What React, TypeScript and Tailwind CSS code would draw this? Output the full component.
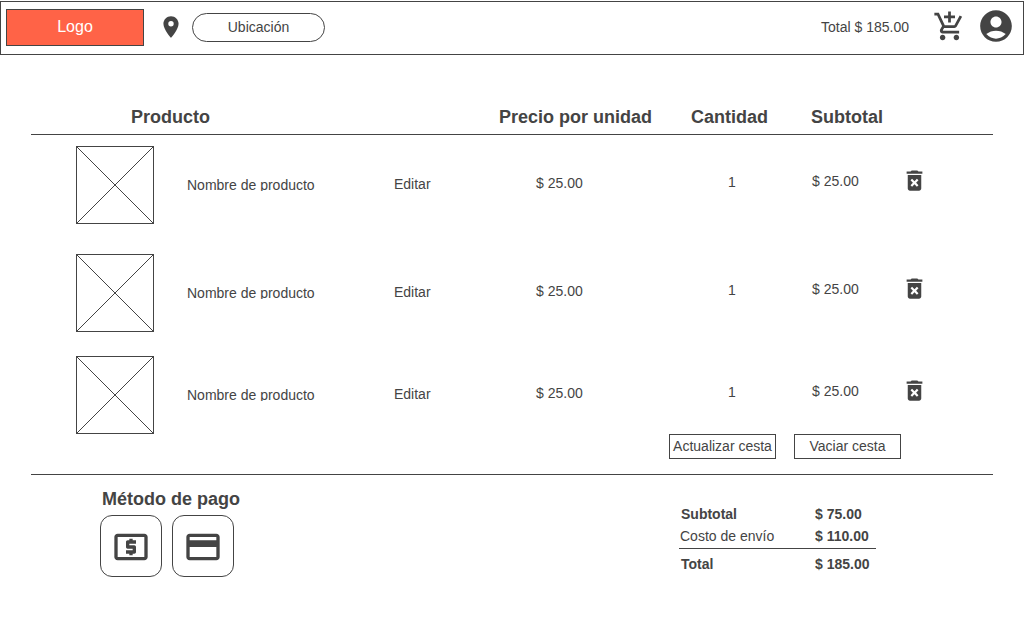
import { MdAccountCircle, MdAddShoppingCart, MdCreditCard, MdDeleteForever, MdLocalAtm, MdLocationOn } from 'react-icons/md';

const products = [
  { id: 1, name: 'Nombre de producto', price: '$ 25.00', quantity: 1, subtotal: '$ 25.00', row: 'h-[108px]' },
  { id: 2, name: 'Nombre de producto', price: '$ 25.00', quantity: 1, subtotal: '$ 25.00', row: 'h-[102px]' },
  { id: 3, name: 'Nombre de producto', price: '$ 25.00', quantity: 1, subtotal: '$ 25.00', row: 'h-[89px]' },
];

function Placeholder() {
  return (
    <svg className="block size-[78px]" viewBox="0 0 78 78" fill="none" stroke="#444" shapeRendering="crispEdges" role="img" aria-label="Imagen">
      <rect x="0.5" y="0.5" width="77" height="77" />
      <path d="M0 0L78 78M78 0L0 78" />
    </svg>
  );
}

function TopBar() {
  return (
    <header className="mt-px flex h-[54px] items-center border border-[#444] pb-[2px] pl-[5px] pr-2">
      <a href="#" className="flex h-[37px] w-[138px] items-center justify-center border border-[#444] bg-[#ff6347] text-base text-white">
        Logo
      </a>
      <MdLocationOn className="ml-[14px] size-[26px]" />
      <button className="ml-2 h-[29px] w-[133px] rounded-full border border-[#444]">Ubicación</button>
      <p className="ml-auto">Total $ 185.00</p>
      <nav className="ml-6 flex items-center gap-[11px] pb-[2px]">
        <button aria-label="Ver cesta">
          <MdAddShoppingCart className="size-[33px]" />
        </button>
        <button aria-label="Mi cuenta">
          <MdAccountCircle className="size-[38px]" />
        </button>
      </nav>
    </header>
  );
}

function CartTable() {
  return (
    <table className="w-full table-fixed border-separate border-spacing-0 text-left">
      <colgroup>
        <col className="w-[156px]" />
        <col className="w-[207px]" />
        <col className="w-[105px]" />
        <col className="w-[192px]" />
        <col className="w-[120px]" />
        <col className="w-[90px]" />
        <col className="w-[92px]" />
      </colgroup>
      <thead className="text-lg leading-[26px]">
        <tr className="h-[31px] align-top">
          <th colSpan={3} className="border-b border-[#444] pl-[100px]">Producto</th>
          <th className="border-b border-[#444]">Precio por unidad</th>
          <th className="border-b border-[#444]">Cantidad</th>
          <th className="border-b border-[#444]">Subtotal</th>
          <td className="border-b border-[#444]" />
        </tr>
      </thead>
      <tbody>
        {products.map((p) => (
          <tr key={p.id} className={`${p.row} align-top`}>
            <td className="pl-[45px] pt-[11px]">
              <Placeholder />
            </td>
            <td className="pt-10">
              <span className="block h-4 overflow-hidden">{p.name}</span>
            </td>
            <td className="pt-[39px]">
              <a href="#" className="block">Editar</a>
            </td>
            <td className="pl-[37px] pt-[38px]">{p.price}</td>
            <td className="pl-[37px] pt-[37px]">{p.quantity}</td>
            <td className="pl-px pt-9">{p.subtotal}</td>
            <td className="pt-8">
              <button aria-label="Eliminar producto" className="block">
                <MdDeleteForever className="size-[27px]" />
              </button>
            </td>
          </tr>
        ))}
      </tbody>
    </table>
  );
}

export default function App() {
  return (
    <div className="flow-root bg-white font-['Liberation_Sans',Arial,sans-serif] text-sm leading-5 text-[#444]">
      <TopBar />
      <main className="mx-[31px] mt-[49px]">
        <CartTable />
        <div className="flex justify-end gap-[18px] border-b border-[#444] pb-[15px] pr-[92px]">
          <button className="h-[25px] w-[107px] whitespace-nowrap border border-[#444] pb-[2px]">Actualizar cesta</button>
          <button className="h-[25px] w-[107px] whitespace-nowrap border border-[#444] pb-[2px]">Vaciar cesta</button>
        </div>
        <div className="flex items-start justify-between pl-[69px] pr-[117px]">
          <section className="pt-3">
            <h2 className="pl-[2px] text-lg font-bold leading-6">Método de pago</h2>
            <div className="mt-1 flex gap-[10px]">
              <button aria-label="Efectivo" className="flex size-[62px] items-center justify-center rounded-xl border border-[#444] pt-[2px]">
                <MdLocalAtm className="size-10" />
              </button>
              <button aria-label="Tarjeta" className="flex size-[62px] items-center justify-center rounded-xl border border-[#444] pt-[2px]">
                <MdCreditCard className="size-10" />
              </button>
            </div>
          </section>
          <dl className="mt-[29px] grid w-[197px] grid-cols-[136px_1fr] font-bold">
            <dt className="h-[22px] pl-[2px]">Subtotal</dt>
            <dd>$ 75.00</dd>
            <dt className="h-[22px] pl-px font-normal">Costo de envío</dt>
            <dd>$ 110.00</dd>
            <dt className="border-t border-[#444] pl-[2px] pt-[5px]">Total</dt>
            <dd className="border-t border-[#444] pt-[5px]">$ 185.00</dd>
          </dl>
        </div>
      </main>
    </div>
  );
}
